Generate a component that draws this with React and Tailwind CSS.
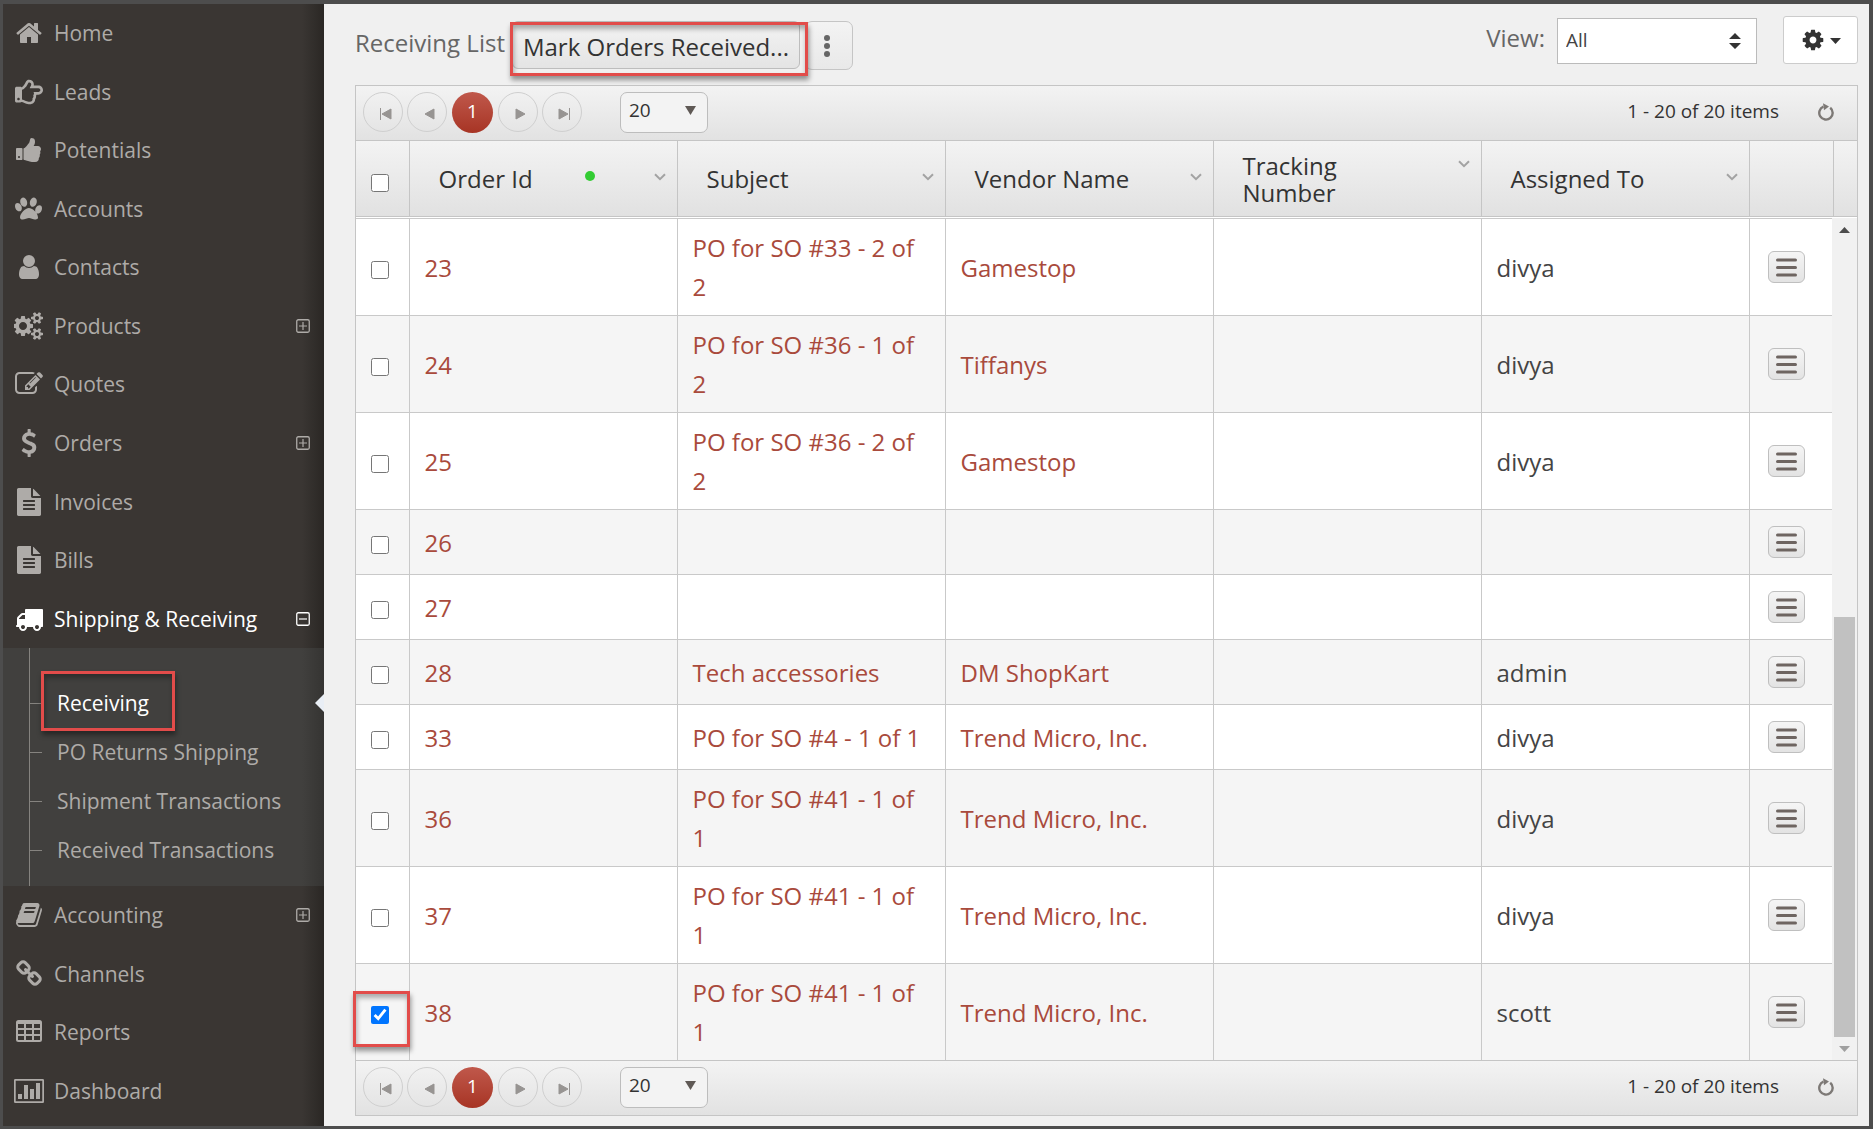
import React from "react";
import { FaRegHandPointRight } from "react-icons/fa";

const PATHS = {
  home: "M1472 992v480q0 26-19 45t-45 19h-384v-384h-256v384h-384q-26 0-45-19t-19-45v-480q0-1 .5-3t.5-3l575-474 575 474q1 2 1 6zm223-69l-62 74q-8 9-21 11h-3q-13 0-21-7l-692-577-692 577q-12 8-24 7-13-2-21-11l-62-74q-8-10-7-23.5t11-21.5l719-599q32-26 76-26t76 26l244 204v-195q0-14 9-23t23-9h192q14 0 23 9t9 23v408l219 182q10 8 11 21.5t-7 23.5z",
  thumb: "M320 1344q0-26-19-45t-45-19q-27 0-45.5 19t-18.5 45q0 27 18.5 45.5t45.5 18.5q26 0 45-18.5t19-45.5zm160-512v640q0 26-19 45t-45 19h-288q-26 0-45-19t-19-45v-640q0-26 19-45t45-19h288q26 0 45 19t19 45zm1184 0q0 86-55 149 15 44 15 76 3 76-43 137 17 56 0 117-15 57-54 94 9 112-49 181-64 76-197 78h-129q-66 0-144-15.5t-121.5-29-120.5-39.5q-123-43-158-44-26-1-45-19.5t-19-44.5v-641q0-25 18-43.5t43-20.5q24-2 76-59t101-121q68-87 101-120 18-18 31-48t17.5-48.5 13.5-60.5q7-39 12.5-61t19.5-52 34-50q19-19 45-19 46 0 82.5 10.5t60 26 40 40.5 24 45 12 50 5 45 .5 39q0 38-9.5 76t-19 60-27.5 56q-3 6-10 18t-11 22-8 24h277q78 0 135 57t57 135z",
  paw: "M780 508q0 60-19 113.5t-63 92.5-105 39q-76 0-138-57.5t-92-135.5-30-151q0-60 19-113.5t63-92.5 105-39q77 0 138.5 57.5t91.5 135 30 151.5zm-342 340q0 80-42 139t-119 59q-76 0-141.5-55.5t-100.5-133.5-35-152q0-80 42-139.5t119-59.5q76 0 141.5 55.5t100.5 134 35 152.5zm458-16q118 0 255 97.5t229 237 92 254.5q0 46-17 76.5t-48.5 45-64.5 20-76 5.5q-68 0-187.5-45t-182.5-45q-66 0-192.5 44.5t-200.5 44.5q-183 0-183-146 0-86 56-191.5t139.5-192.5 187.5-146 193-59zm239-79q-61 0-105-39t-63-92.5-19-113.5q0-74 30-151.5t91.5-135 138.5-57.5q61 0 105 39t63 92.5 19 113.5q0 73-30 151t-92 135.5-138 57.5zm432-104q77 0 119 59.5t42 139.5q0 74-35 152t-100.5 133.5-141.5 55.5q-77 0-119-59t-42-139q0-74 35-152.5t100.5-134 141.5-55.5z",
  user: "M1536 1399q0 109-62.5 187t-150.5 78h-854q-88 0-150.5-78t-62.5-187q0-85 8.5-160.5t31.5-152 58.5-131 94-89 134.5-34.5q131 128 313 128t313-128q76 0 134.5 34.5t94 89 58.5 131 31.5 152 8.5 160.5zm-256-887q0 159-112.5 271.5t-271.5 112.5-271.5-112.5-112.5-271.5 112.5-271.5 271.5-112.5 271.5 112.5 112.5 271.5z",
  cogs: "M832 896q0-106-75-181t-181-75-181 75-75 181 75 181 181 75 181-75 75-181zm768 512q0-52-38-90t-90-38-90 38-38 90q0 53 37.5 90.5t90.5 37.5 90.5-37.5 37.5-90.5zm0-1024q0-52-38-90t-90-38-90 38-38 90q0 53 37.5 90.5t90.5 37.5 90.5-37.5 37.5-90.5zm-384 421v185q0 10-7 19.5t-16 10.5l-155 24q-11 35-32 76 34 48 90 115 7 11 7 20 0 12-7 19-23 30-82.5 89.5t-78.5 59.5q-11 0-21-7l-115-90q-37 19-77 31-11 108-23 155-7 24-30 24h-186q-11 0-20-7.5t-10-17.5l-23-153q-34-10-75-31l-118 89q-7 7-20 7-11 0-21-8-144-133-144-160 0-9 7-19 10-14 41-53t47-61q-23-44-35-82l-152-24q-10-1-17-9.5t-7-19.5v-185q0-10 7-19.5t16-10.5l155-24q11-35 32-76-34-48-90-115-7-11-7-20 0-12 7-20 22-30 82-89t79-59q11 0 21 7l115 90q34-18 77-32 11-108 23-154 7-24 30-24h186q11 0 20 7.5t10 17.5l23 153q34 10 75 31l118-89q8-7 20-7 11 0 21 8 144 133 144 160 0 8-7 19-12 16-42 54t-45 60q23 48 34 82l152 23q10 2 17 10.5t7 19.5zm640 533v140q0 16-149 31-12 27-30 52 51 113 51 138 0 4-4 7-122 71-124 71-8 0-46-47t-52-68q-20 2-30 2t-30-2q-14 21-52 68t-46 47q-2 0-124-71-4-3-4-7 0-25 51-138-18-25-30-52-149-15-149-31v-140q0-16 149-31 13-29 30-52-51-113-51-138 0-4 4-7 4-2 35-20t59-34 30-16q8 0 46 46.5t52 67.5q20-2 30-2t30 2q51-71 92-112l6-2q4 0 124 70 4 3 4 7 0 25-51 138 17 23 30 52 149 15 149 31zm0-1024v140q0 16-149 31-12 27-30 52 51 113 51 138 0 4-4 7-122 71-124 71-8 0-46-47t-52-68q-20 2-30 2t-30-2q-14 21-52 68t-46 47q-2 0-124-71-4-3-4-7 0-25 51-138-18-25-30-52-149-15-149-31v-140q0-16 149-31 13-29 30-52-51-113-51-138 0-4 4-7 4-2 35-20t59-34 30-16q8 0 46 46.5t52 67.5q20-2 30-2t30 2q51-71 92-112l6-2q4 0 124 70 4 3 4 7 0 25-51 138 17 23 30 52 149 15 149 31z",
  edit: "M888 1184l116-116-152-152-116 116v56h96v96h56zm440-720q-16-16-33 1l-350 350q-17 17-1 33t33-1l350-350q17-17 1-33zm80 594v190q0 119-84.5 203.5t-203.5 84.5h-832q-119 0-203.5-84.5t-84.5-203.5v-832q0-119 84.5-203.5t203.5-84.5h832q63 0 117 25 15 7 18 23 3 17-9 29l-49 49q-14 14-32 8-23-6-45-6h-832q-66 0-113 47t-47 113v832q0 66 47 113t113 47h832q66 0 113-47t47-113v-126q0-13 9-22l64-64q15-15 35-7t20 29zm-96-738l288 288-672 672h-288v-288zm444 132l-92 92-288-288 92-92q28-28 68-28t68 28l152 152q28 28 28 68t-28 68z",
  dollar: "M1362 1185q0 153-99.5 263.5t-258.5 136.5v175q0 14-9 23t-23 9h-135q-13 0-22.5-9.5t-9.5-22.5v-175q-66-9-127.5-31t-101.5-44.5-74-48-46.5-37.5-17.5-18q-17-21-2-41l103-135q7-10 23-12 15-2 24 9l2 2q113 99 243 125 37 8 74 8 81 0 142.5-43t61.5-122q0-28-15-53t-33.5-42-58.5-37.5-66-32-80-32.5q-39-16-61.5-25t-61.5-26.5-62.5-31-56.5-35.5-53.5-42.5-43.5-49-35.5-58-21-66.5-8.5-78q0-138 98-242t255-134v-180q0-13 9.5-22.5t22.5-9.5h135q14 0 23 9t9 23v176q57 6 110.5 23t87 33.5 63.5 37.5 39 29 15 14q17 18 5 38l-81 146q-8 15-23 16-14 3-27-7-3-3-14.5-12t-39-26.5-58.5-32-74.5-26-85.5-11.5q-95 0-155 43t-60 111q0 26 8.5 48t29.5 41.5 39.5 33 56 31 60.5 27 70 27.5q53 20 81 31.5t76 35 75.5 42.5 62 50 53 63.5 31.5 76.5 13 94z",
  file: "M1596 476q14 14 28 36h-472v-472q22 14 36 28zm-476 164h544v1056q0 40-28 68t-68 28h-1344q-40 0-68-28t-28-68v-1600q0-40 28-68t68-28h800v544q0 40 28 68t68 28zm160 736v-64q0-14-9-23t-23-9h-704q-14 0-23 9t-9 23v64q0 14 9 23t23 9h704q14 0 23-9t9-23zm0-256v-64q0-14-9-23t-23-9h-704q-14 0-23 9t-9 23v64q0 14 9 23t23 9h704q14 0 23-9t9-23zm0-256v-64q0-14-9-23t-23-9h-704q-14 0-23 9t-9 23v64q0 14 9 23t23 9h704q14 0 23-9t9-23z",
  truck: "M640 1408q0-52-38-90t-90-38-90 38-38 90 38 90 90 38 90-38 38-90zm-384-512h384v-256h-158q-13 0-22 9l-195 195q-9 9-9 22v30zm1280 512q0-52-38-90t-90-38-90 38-38 90 38 90 90 38 90-38 38-90zm256-1088v1024q0 15-4 26.5t-13.5 18.5-16.5 11.5-23.5 6-22.5 2-25.5 0-22.5-.5q0 106-75 181t-181 75-181-75-75-181h-384q0 106-75 181t-181 75-181-75-75-181h-64q-3 0-22.5.5t-25.5 0-22.5-2-23.5-6-16.5-11.5-13.5-18.5-4-26.5q0-26 19-45t45-19v-320q0-8-.5-35t0-38 2.5-34.5 6.5-37 14-30.5 22.5-30l198-198q19-19 50.5-32t58.5-13h160v-192q0-26 19-45t45-19h1024q26 0 45 19t19 45z",
  book: "M1703 478q40 57 18 129l-275 906q-19 64-76.5 107.5t-122.5 43.5h-923q-77 0-148.5-53.5t-99.5-131.5q-24-67-2-127 0-4 3-27t4-37q1-8-3-21.5t-3-19.5q2-11 8-21t16.5-23.5 16.5-23.5q23-38 45-91.5t30-91.5q3-10 .5-30t-.5-28q3-11 17-28t17-23q21-36 42-92t25-90q1-9-2.5-32t.5-28q4-13 22-30.5t22-22.5q19-26 42.5-84.5t27.5-96.5q1-8-3-25.5t-2-26.5q2-8 9-18t18-23 17-21q8-12 16.5-30.5t15-35 16-36 19.5-32 26.5-23.5 36-11.5 47.5 5.5l-1 3q38-9 51-9h761q74 0 114 56t18 130l-274 906q-36 119-71.5 153.5t-128.5 34.5h-869q-27 0-38 15-11 16-1 43 24 70 144 70h923q29 0 56-15.5t35-41.5l300-987q7-22 5-57 38 15 59 43zm-1064 2q-4 13 2 22.5t20 9.5h608q13 0 25.5-9.5t16.5-22.5l21-64q4-13-2-22.5t-20-9.5h-608q-13 0-25.5 9.5t-16.5 22.5zm-83 256q-4 13 2 22.5t20 9.5h608q13 0 25.5-9.5t16.5-22.5l21-64q4-13-2-22.5t-20-9.5h-608q-13 0-25.5 9.5t-16.5 22.5z",
  link: "M1520 1216q0-40-28-68l-208-208q-28-28-68-28-42 0-72 32 3 3 19 18.5t21.5 21.5 15 19 13 25.5 3.5 27.5q0 40-28 68t-68 28q-15 0-27.5-3.5t-25.5-13-19-15-21.5-21.5-18.5-19q-33 31-33 73 0 40 28 68l206 207q27 27 68 27 40 0 68-26l147-146q28-28 28-67zm-703-705q0-40-28-68l-206-207q-28-28-68-28-39 0-68 27l-147 146q-28 28-28 67 0 40 28 68l208 208q27 27 68 27 42 0 72-31-3-3-19-18.5t-21.5-21.5-15-19-13-25.5-3.5-27.5q0-40 28-68t68-28q15 0 27.5 3.5t25.5 13 19 15 21.5 21.5 18.5 19q33-31 33-73zm895 705q0 120-85 203l-147 146q-83 83-203 83-121 0-204-85l-206-207q-83-83-83-203 0-123 88-209l-88-88q-86 88-208 88-120 0-204-84l-208-208q-84-84-84-204t85-203l147-146q83-83 203-83 121 0 204 85l206 207q83 83 83 203 0 123-88 209l88 88q86-88 208-88 120 0 204 84l208 208q84 84 84 204z",
  table: "M224 128h1344q160 0 160 160v1088q0 160-160 160h-1344q-160 0-160-160v-1088q0-160 160-160zM192 384v256h384v-256zM704 384v256h384v-256zM1216 384v256h384v-256zM192 768v256h384v-256zM704 768v256h384v-256zM1216 768v256h384v-256zM192 1152v256h384v-256zM704 1152v256h384v-256zM1216 1152v256h384v-256z",
  cog: "M1152 896q0-106-75-181t-181-75-181 75-75 181 75 181 181 75 181-75 75-181zm512-109v222q0 12-8 23t-20 13l-185 28q-19 54-39 91 35 50 107 138 10 12 10 25t-9 23q-27 37-99 108t-94 71q-12 0-26-9l-138-108q-44 23-91 38-16 136-29 186-7 28-36 28h-222q-14 0-24.5-8.5t-11.5-21.5l-28-184q-49-16-90-37l-141 107q-10 9-25 9-14 0-25-11-126-114-165-168-7-10-7-23 0-12 8-23 15-21 51-66.5t54-70.5q-27-50-41-99l-183-27q-13-2-21-12.5t-8-23.5v-222q0-12 8-23t19-13l186-28q14-46 39-92-40-57-107-138-10-12-10-24 0-10 9-23 26-36 98.5-107.5t94.5-71.5q13 0 26 10l138 107q44-23 91-38 16-136 29-186 7-28 36-28h222q14 0 24.5 8.5t11.5 21.5l28 184q49 16 90 37l142-107q9-9 24-9 13 0 25 10 129 119 165 170 7 8 7 22 0 12-8 23-15 21-51 66.5t-54 70.5q26 50 41 98l183 28q13 2 21 12.5t8 23.5z",
};

function Glyph({ name, className = "h-7" }) {
  const width = name === "cogs" || name === "chart" ? 1920 : 1792;
  return (
    <svg aria-hidden="true" className={className} viewBox={`0 0 ${width} 1792`} fill="currentColor">
      {name === "chart" ? (
        <>
          <path fillRule="evenodd" d="M80 128h1760q80 0 80 80v1376q0 80-80 80h-1760q-80 0-80-80v-1376q0-80 80-80zM110 238v1316h1700v-1316z" />
          <path d="M256 1088h256v320h-256zM640 512h256v896h-256zM1024 768h256v640h-256zM1408 384h256v1024h-256z" />
        </>
      ) : (
        <path fillRule={name === "table" ? "evenodd" : "nonzero"} d={PATHS[name]} />
      )}
    </svg>
  );
}

function Toggle({ open }) {
  return (
    <svg aria-hidden="true" className="mr-[14px] size-[14px]" viewBox="0 0 14 14" fill="none" stroke="currentColor">
      <rect x="0.75" y="0.75" width="12.5" height="12.5" rx="1.5" strokeWidth="1.3" />
      <path d={open ? "M3 7h8" : "M3 7h8M7 3v8"} strokeWidth="1.2" />
    </svg>
  );
}

function Highlight({ className }) {
  return (
    <span
      aria-hidden="true"
      className={`pointer-events-none absolute z-10 border-[3px] border-[#e24c4a] shadow-[1px_4px_5px_rgba(0,0,0,0.4),inset_1px_4px_5px_rgba(0,0,0,0.3)] ${className}`}
    />
  );
}

const MENU = [
  ["Home", "home"],
  ["Leads", "hand"],
  ["Potentials", "thumb"],
  ["Accounts", "paw"],
  ["Contacts", "user"],
  ["Products", "cogs", true],
  ["Quotes", "edit"],
  ["Orders", "dollar", true],
  ["Invoices", "file"],
  ["Bills", "file"],
  ["Shipping & Receiving", "truck", true],
  ["Accounting", "book", true],
  ["Channels", "link"],
  ["Reports", "table"],
  ["Dashboard", "chart"],
];

const SUBMENU = ["Receiving", "PO Returns Shipping", "Shipment Transactions", "Received Transactions"];

function Submenu() {
  return (
    <ul className="ml-[26px] border-l border-[#85837f] pt-[31px] pb-[11px]">
      {SUBMENU.map((label, i) => (
        <li key={label} className="relative flex h-[49px] items-center">
          <span className="h-px w-3 bg-[#85837f]" />
          <a href="#" className={i === 0 ? "ml-[15px] text-white" : "ml-[15px]"}>
            {label}
          </a>
          {i === 0 && (
            <>
              <Highlight className="-top-2 left-[11px] h-[60px] w-[134px]" />
              <svg aria-hidden="true" className="absolute right-0 h-[18px] w-[9px] text-[#e9eef5]" viewBox="0 0 9 18" fill="currentColor">
                <path d="M9 0v18L0 9z" />
              </svg>
            </>
          )}
        </li>
      ))}
    </ul>
  );
}

function Sidebar() {
  return (
    <nav className="flex w-[321px] shrink-0 flex-col bg-[#3a3633] pb-[6px] text-[21px] leading-7 text-[#aeaba8] [background-image:linear-gradient(to_left,#2a2724,#3a3633_22px)]">
      {MENU.map(([label, icon, expandable]) => {
        const open = icon === "truck";
        return (
          <React.Fragment key={label}>
            <a href="#" className={open ? "flex grow items-center pl-[10px] text-white" : "flex grow items-center pl-[10px]"}>
              <span className="mr-[10px] flex w-[31px] shrink-0 justify-center">
                {icon === "hand" ? <FaRegHandPointRight className="size-7" /> : <Glyph name={icon} />}
              </span>
              <span className="flex-1">{label}</span>
              {expandable && <Toggle open={open} />}
            </a>
            {open && (
              <div className="bg-[#41403e] [background-image:linear-gradient(to_left,#353432,#41403e_22px)]">
                <Submenu />
              </div>
            )}
          </React.Fragment>
        );
      })}
    </nav>
  );
}

const PAGE_ICONS = {
  "First page": "M1.5 0v12M12 1v10L3 6z",
  "Previous page": "M11 1v10L2 6z",
  "Next page": "M2 1v10l9-5z",
  "Last page": "M11.5 0v12M1 1v10l9-5z",
};

function PageButton({ label }) {
  return (
    <button aria-label={label} className="flex size-10 items-center justify-center rounded-full border border-[#cfcfcf] text-[#979492]">
      <svg className="mt-1 ml-1 h-3 w-[13px]" viewBox="0 0 13 12" fill="currentColor" stroke="currentColor" strokeWidth="1">
        <path d={PAGE_ICONS[label]} />
      </svg>
    </button>
  );
}

function Pager({ place }) {
  return (
    <div className="flex h-[54px] items-center bg-linear-to-b from-[#f3f3f3] to-[#e2e2e2] pr-[22px] pb-[2px] pl-[7px] text-[19px] text-[#333]">
      <div className="flex items-center gap-1">
        <PageButton label="First page" />
        <PageButton label="Previous page" />
        <button className="mx-px size-[41px] rounded-full bg-linear-to-b from-[#c0584b] to-[#a73424] text-white">1</button>
        <PageButton label="Next page" />
        <PageButton label="Last page" />
      </div>
      <div className="relative ml-[38px]">
        <select
          aria-label={`Items per page, ${place}`}
          className="block h-[41px] w-[88px] appearance-none rounded-[7px] border border-[#bdbdbd] bg-[#f3f3f3] pb-[2px] pl-2 text-[#333]"
        >
          <option>20</option>
        </select>
        <svg aria-hidden="true" className="pointer-events-none absolute top-[14px] right-3 h-[9px] w-[11px] text-[#5f5955]" viewBox="0 0 11 9" fill="currentColor">
          <path d="M0 0h11L5.5 9z" />
        </svg>
      </div>
      <span className="ml-auto">1 - 20 of 20 items</span>
      <button aria-label="Refresh" className="ml-[38px] text-[#7d7976]">
        <svg className="size-[18px]" viewBox="0 0 18 18" fill="none" stroke="currentColor" strokeWidth="2.4">
          <path d="M13.2 4.7A6.7 6.7 0 1 1 6.4 3.7" />
          <path d="M6 0.2l6 3.2-5 3.8z" fill="currentColor" stroke="none" />
        </svg>
      </button>
    </div>
  );
}

const COLUMNS = ["Order Id", "Subject", "Vendor Name", "Tracking Number", "Assigned To"];

const ROWS = [
  ["23", "PO for SO #33 - 2 of 2", "Gamestop", "divya"],
  ["24", "PO for SO #36 - 1 of 2", "Tiffanys", "divya"],
  ["25", "PO for SO #36 - 2 of 2", "Gamestop", "divya"],
  ["26", "", "", ""],
  ["27", "", "", ""],
  ["28", "Tech accessories", "DM ShopKart", "admin"],
  ["33", "PO for SO #4 - 1 of 1", "Trend Micro, Inc.", "divya"],
  ["36", "PO for SO #41 - 1 of 1", "Trend Micro, Inc.", "divya"],
  ["37", "PO for SO #41 - 1 of 1", "Trend Micro, Inc.", "divya"],
  ["38", "PO for SO #41 - 1 of 1", "Trend Micro, Inc.", "scott"],
];

function HeaderTable() {
  return (
    <table className="w-full table-fixed border-y border-[#c5c5c5] text-left text-[#333]">
      <thead>
        <tr className="h-[76px] bg-linear-to-b from-[#f3f3f3] to-[#e1e1e1]">
          <th className="w-[53px] pt-[9px] pl-[15px] font-normal">
            <input type="checkbox" aria-label="Select all orders" className="block size-[18px]" />
          </th>
          {COLUMNS.map((label, i) => (
            <th key={label} scope="col" className="border-l border-[#c5c5c5] pr-[11px] pl-[29px] font-normal">
              <div className="flex items-start">
                <span className="mr-8 flex-1 leading-[27px]">{label}</span>
                {i === 0 && <span className="mt-[6px] mr-[59px] size-[10px] rounded-full bg-[#33cc33]" />}
                <button aria-label={`${label} column settings`} className="pt-2 text-[#a3a3a3]">
                  <svg className="h-2 w-3" viewBox="0 0 12 8" fill="none" stroke="currentColor" strokeWidth="2">
                    <path d="M1 1.2l5 5 5-5" />
                  </svg>
                </button>
              </div>
            </th>
          ))}
          <td className="w-[84px] border-l border-[#c5c5c5]" />
          <td className="w-6 border-l border-[#c5c5c5]" />
        </tr>
      </thead>
    </table>
  );
}

const CELL = "border-t border-l border-[#c9c9c9] px-[15px] py-[9px]";

function BodyTable() {
  return (
    <table className="w-full table-fixed leading-[39px] text-[#444]">
      <colgroup>
        <col className="w-[53px]" />
        <col span="5" />
        <col className="w-[83px]" />
      </colgroup>
      <tbody>
        {ROWS.map(([id, subject, vendor, assigned], i) => (
          <tr key={id} className="h-[65px] odd:bg-white even:bg-[#f5f5f5]">
            <td className="relative border-t border-[#c9c9c9] pt-[5px] pl-[15px]">
              <input type="checkbox" aria-label={`Select order ${id}`} defaultChecked={id === "38"} className="block size-[18px] accent-[#0075ff]" />
              {id === "38" && <Highlight className="top-[27px] -left-[3px] h-[56px] w-[57px]" />}
            </td>
            <td className={CELL}><a href="#" className="text-[#a94a3c]">{id}</a></td>
            <td className={CELL}>{subject && <a href="#" className="text-[#a94a3c]">{subject}</a>}</td>
            <td className={CELL}>{vendor && <a href="#" className="text-[#a94a3c]">{vendor}</a>}</td>
            <td className={CELL} />
            <td className={CELL}>{assigned}</td>
            <td className="border-t border-l border-[#c9c9c9] pl-[18px]">
              <button
                aria-label={`Actions for order ${id}`}
                className="flex h-8 w-[37px] items-center justify-center rounded-[6px] border border-[#bfbfbf] bg-linear-to-b from-[#f5f5f5] to-[#e3e3e3] text-[#6e6561]"
              >
                <svg className="h-[19px] w-[21px]" viewBox="0 0 21 19" stroke="currentColor" strokeWidth="3" strokeLinecap="round">
                  <path d="M1.5 2h18M1.5 9.5h18M1.5 17h18" />
                </svg>
              </button>
            </td>
          </tr>
        ))}
      </tbody>
    </table>
  );
}

function Scrollbar() {
  return (
    <div aria-hidden="true" className="flex w-[25px] shrink-0 flex-col items-center bg-[#f1f1f1] pt-[9px] pb-2">
      <svg className="h-[6px] w-[11px] text-[#4d4d4d]" viewBox="0 0 11 6" fill="currentColor"><path d="M5.5 0L11 6H0z" /></svg>
      <div className="mt-auto h-[420px] w-[21px] bg-[#c1c1c1]" />
      <svg className="mt-[9px] h-[6px] w-[11px] text-[#a0a0a0]" viewBox="0 0 11 6" fill="currentColor"><path d="M0 0h11L5.5 6z" /></svg>
    </div>
  );
}

function Toolbar() {
  return (
    <header className="flex items-start justify-between pt-3">
      <div className="flex items-start">
        <h1 className="pt-[11px] text-[#666] leading-8">Receiving List</h1>
        <div className="relative mt-[5px] ml-[7px]">
          <button className="h-12 rounded-[6px] border border-[#bdbdbd] bg-linear-to-b from-[#f3f3f3] to-[#e4e4e4] px-[10px] pt-1 text-[#333]">
            Mark Orders Received...
          </button>
          <Highlight className="top-px -left-[2px] h-[54px] w-[298px]" />
        </div>
        <button aria-label="More actions" className="mt-[5px] ml-[5px] flex h-[49px] w-12 items-center justify-center rounded-[7px] border border-[#c5c5c5] bg-linear-to-b from-[#f3f3f3] to-[#e9e9e9] text-[#666]">
          <svg className="mr-1 h-[22px] w-[6px]" viewBox="0 0 6 22" fill="currentColor">
            <circle cx="3" cy="3" r="3" /><circle cx="3" cy="11" r="3" /><circle cx="3" cy="19" r="3" />
          </svg>
        </button>
      </div>
      <div className="flex items-start">
        <label htmlFor="view" className="pt-[6px] text-[#666] leading-8">View:</label>
        <div className="relative mt-[2px] ml-3">
          <select id="view" className="block h-[46px] w-[200px] appearance-none border border-[#bbb] bg-white pl-2 text-[19px] text-[#444]">
            <option>All</option>
          </select>
          <svg aria-hidden="true" className="pointer-events-none absolute top-[15px] right-4 h-4 w-3 text-[#333]" viewBox="0 0 12 16" fill="currentColor">
            <path d="M6 0l6 6H0zM6 16l6-6H0z" />
          </svg>
        </div>
        <button aria-label="Settings" className="ml-[26px] flex h-12 w-[75px] items-center justify-center gap-[5px] rounded-[3px] border border-[#ccc] bg-white text-[#333]">
          <Glyph name="cog" className="size-6" />
          <svg className="mt-[2px] h-[6px] w-[11px]" viewBox="0 0 11 6" fill="currentColor"><path d="M0 0h11L5.5 6z" /></svg>
        </button>
      </div>
    </header>
  );
}

export default function App() {
  return (
    <div className="flex min-h-screen border-t-4 border-r-4 border-b-[3px] border-l-[3px] border-[#4d4d4d] bg-[#f0f0f0] font-['Open_Sans',sans-serif] text-2xl">
      <Sidebar />
      <main className="min-w-0 flex-1 pr-[11px] pb-2 pl-[31px]">
        <Toolbar />
        <section className="mt-[15px] border border-[#c5c5c5]">
          <Pager place="top" />
          <HeaderTable />
          <div className="flex border-b border-[#c5c5c5] bg-white pt-px">
            <div className="min-w-0 flex-1">
              <BodyTable />
            </div>
            <Scrollbar />
          </div>
          <Pager place="bottom" />
        </section>
      </main>
    </div>
  );
}
